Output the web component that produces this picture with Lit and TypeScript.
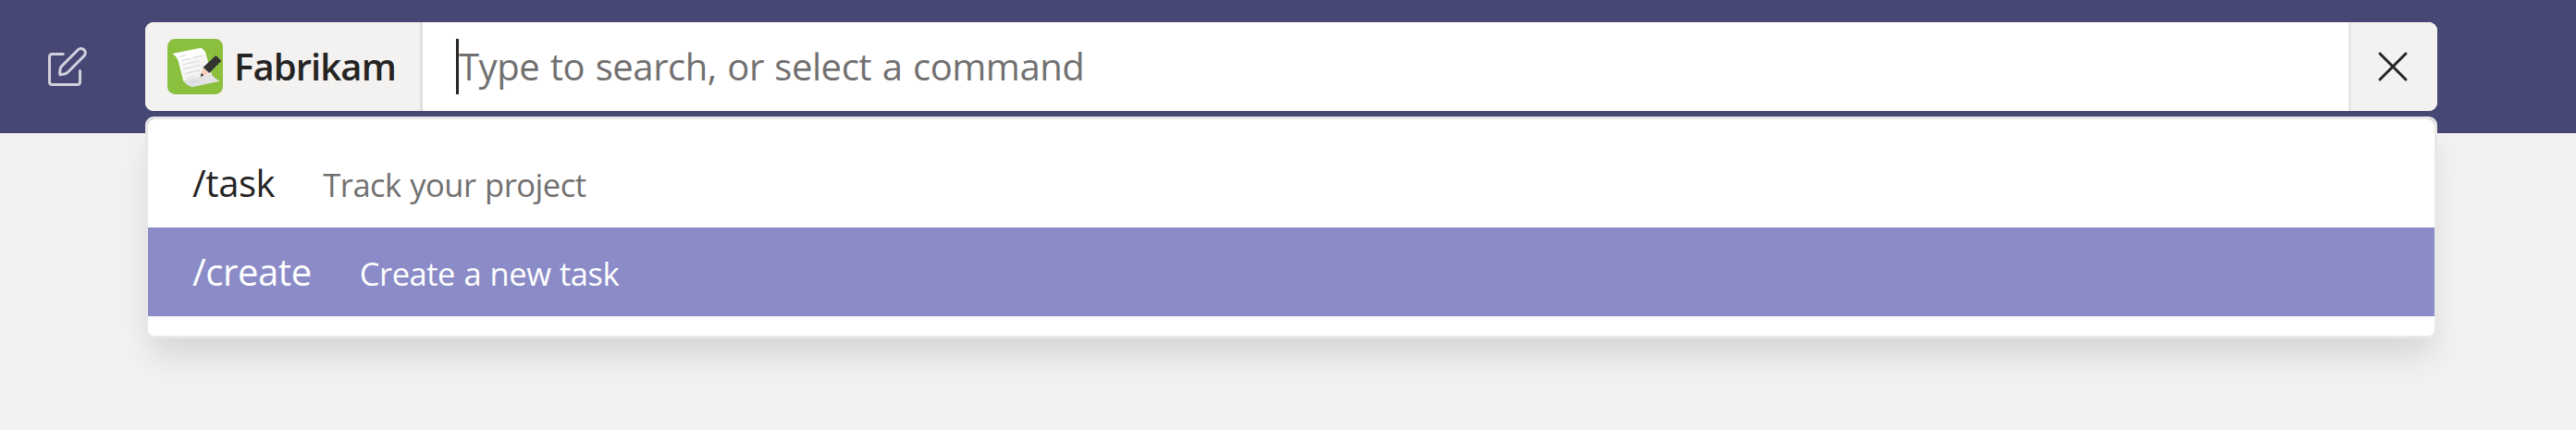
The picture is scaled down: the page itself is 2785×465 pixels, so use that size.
import { LitElement, html, css } from "lit";
import { customElement, property, state } from "lit/decorators.js";
import { classMap } from "lit/directives/class-map.js";

interface Command {
  name: string;
  description: string;
}

@customElement("compose-icon")
class ComposeIcon extends LitElement {
  static styles = css`
    :host { display: block; width: 48px; height: 48px; }
    svg { display: block; }
  `;
  render() {
    return html`<svg width="48" height="48" viewBox="48 48 48 48" fill="none" stroke="#d1d0dd" stroke-width="3" stroke-linecap="round" stroke-linejoin="round">
      <path d="M68.3 58.4H56.5Q53.5 58.4 53.5 61.4V88.6Q53.5 91.6 56.5 91.6H83.5Q86.5 91.6 86.5 88.6V76.5" />
      <path d="M66.6 71.6L84.4 53.8C88.6 49.6 95.1 56.1 91 60.4L73.2 78.2Q71.6 79.7 69.8 80L64.9 80.7Q64.3 79 65.2 74.2Q65.5 72.7 66.6 71.6Z" />
    </svg>`;
  }
}

@customElement("fabrikam-logo")
class FabrikamLogo extends LitElement {
  static styles = css`
    :host { display: block; width: 60px; height: 60px; }
    svg { display: block; }
  `;
  render() {
    return html`<svg width="60" height="60" viewBox="0 0 180 180">
      <defs>
        <linearGradient id="sheet" x1="0" y1="0" x2="1" y2="1">
          <stop offset="0" stop-color="#fff" />
          <stop offset="1" stop-color="#ececee" />
        </linearGradient>
      </defs>
      <rect width="180" height="180" rx="25" fill="#8bc03f" />
      <path d="M33 64L123 42L144 117L52 138Z" fill="url(#sheet)" />
      <path d="M16 48L108 29Q116 31 123 43Q119 50 108 52L34 68Q27 54 16 48Z" fill="#fff" />
      <path d="M52 138L143 116Q153 128 170 137L79 157Q65 151 52 138Z" fill="#e3e2e4" />
      <g stroke="#c4c4c8" stroke-width="2" fill="none">
        <path d="M38 59L60 53M47 70L77 64M84 62L114 54M49 84L103 72M52 98L109 84M57 113L105 102M62 129L88 122M75 142L98 137" />
      </g>
      <path d="M116 91L136 112L107 122Z" fill="#f6cdb9" />
      <path d="M111 111L118 119L107 122Z" fill="#2d2d2d" />
      <path d="M116 92L157 54L175 71L136 111Z" fill="#333" />
    </svg>`;
  }
}

@customElement("command-row")
class CommandRow extends LitElement {
  static styles = css`
    :host { display: block; }
    .row {
      display: flex;
      align-items: center;
      height: 96px;
      padding: 0 48px 1px;
      box-sizing: border-box;
      color: #252423;
      white-space: nowrap;
    }
    .text { display: flex; align-items: baseline; gap: 52px; }
    .name { font-size: 40px; letter-spacing: -0.4px; }
    .description { font-size: 34.5px; letter-spacing: -0.48px; word-spacing: 1px; color: #717070; }
    .active { background: #8b8cc7; color: #fff; }
    .active .description { color: #fff; }
  `;
  @property({ attribute: false }) command!: Command;
  @property({ type: Boolean }) active = false;
  render() {
    return html`<div class=${classMap({ row: true, active: this.active })} role="option">
      <div class="text">
        <span class="name">${this.command.name}</span>
        <span class="description">${this.command.description}</span>
      </div>
    </div>`;
  }
}

@customElement("app-root")
class AppRoot extends LitElement {
  static styles = css`
    :host {
      display: block;
      height: 465px;
      overflow: hidden;
      background: #f3f2f1;
      font-family: "Open Sans", "Noto Sans", sans-serif;
    }
    .header {
      display: flex;
      align-items: flex-start;
      height: 144px;
      padding: 24px 150px 0 48px;
      box-sizing: border-box;
      background: #464775;
    }
    .compose { padding-top: 24px; width: 109px; }
    .search { position: relative; flex: 1; height: 96px; }
    .bar {
      display: flex;
      height: 96px;
      border-radius: 9px;
      overflow: hidden;
      background: #fff;
    }
    .scope {
      display: flex;
      align-items: center;
      gap: 12px;
      width: 300px;
      padding-left: 24px;
      box-sizing: border-box;
      background: #f3f2f1;
      border-right: 3px solid #e1e1e0;
    }
    .scope-name {
      padding-bottom: 1px;
      font-size: 40px;
      font-weight: 600;
      letter-spacing: -0.9px;
      color: #252423;
    }
    .field { display: flex; align-items: center; flex: 1; padding-left: 36px; }
    .caret { width: 3px; height: 60px; background: #252423; }
    .placeholder {
      padding-bottom: 1px;
      font-size: 40px;
      letter-spacing: -0.43px;
      word-spacing: 1.5px;
      white-space: nowrap;
      color: #717070;
    }
    .close {
      display: flex;
      align-items: center;
      justify-content: center;
      width: 96px;
      padding-right: 3px;
      box-sizing: border-box;
      background: #f3f2f1;
      border-left: 3px solid #e8e7e7;
    }
    .menu {
      position: absolute;
      top: 102px;
      left: 0;
      right: 0;
      padding: 21px 0;
      background: #fff;
      background-clip: padding-box;
      border: 3px solid #e8e8e8;
      border-radius: 9px;
      box-shadow: 0 24px 36px -6px rgba(0, 0, 0, 0.12);
    }
  `;

  @state() private selected = 1;

  private commands: Command[] = [
    { name: "/task", description: "Track your project" },
    { name: "/create", description: "Create a new task" },
  ];

  render() {
    return html`
      <div class="header">
        <div class="compose"><compose-icon></compose-icon></div>
        <div class="search">
          <div class="bar">
            <div class="scope">
              <fabrikam-logo></fabrikam-logo>
              <span class="scope-name">Fabrikam</span>
            </div>
            <div class="field">
              <span class="caret"></span>
              <span class="placeholder">Type to search, or select a command</span>
            </div>
            <div class="close">
              <svg width="34" height="34" viewBox="-17 -17 34 34" stroke="#252423" stroke-width="3" stroke-linecap="round">
                <path d="M-14 -14L14 14M14 -14L-14 14" />
              </svg>
            </div>
          </div>
          <div class="menu" role="listbox">
            ${this.commands.map(
              (c, i) => html`<command-row .command=${c} ?active=${i === this.selected}></command-row>`
            )}
          </div>
        </div>
      </div>
    `;
  }
}
